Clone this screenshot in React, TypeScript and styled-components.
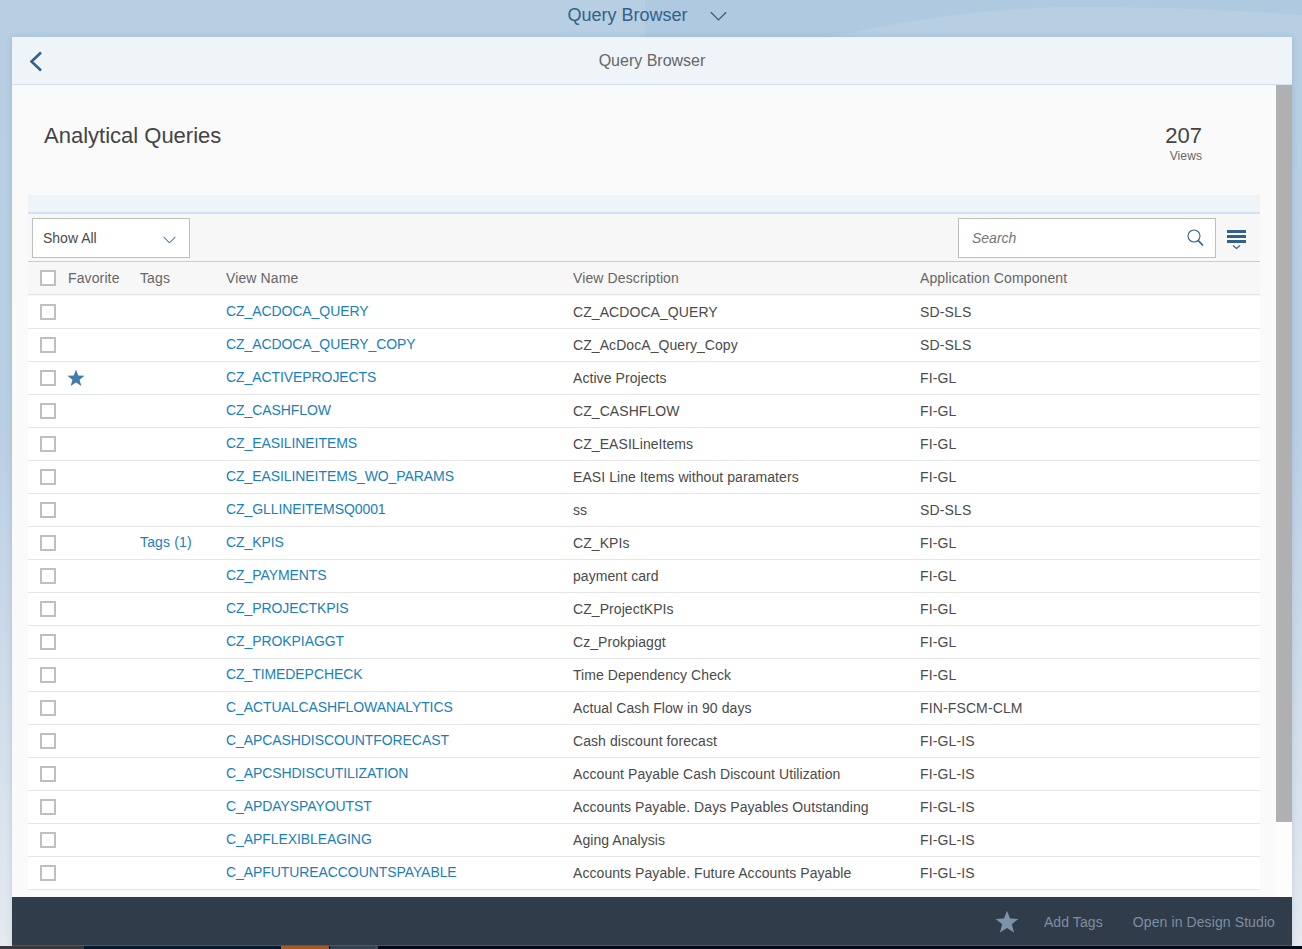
import React from 'react';
import styled, { createGlobalStyle } from 'styled-components';

const GlobalStyle = createGlobalStyle`
  html, body {
    margin: 0;
    padding: 0;
    height: 100%;
    overflow: hidden;
  }
  body {
    font-family: "Liberation Sans", Arial, sans-serif;
    color: #333;
  }
`;

const rows = [
  { name: 'CZ_ACDOCA_QUERY', desc: 'CZ_ACDOCA_QUERY', comp: 'SD-SLS' },
  { name: 'CZ_ACDOCA_QUERY_COPY', desc: 'CZ_AcDocA_Query_Copy', comp: 'SD-SLS' },
  { name: 'CZ_ACTIVEPROJECTS', desc: 'Active Projects', comp: 'FI-GL', favorite: true },
  { name: 'CZ_CASHFLOW', desc: 'CZ_CASHFLOW', comp: 'FI-GL' },
  { name: 'CZ_EASILINEITEMS', desc: 'CZ_EASILineItems', comp: 'FI-GL' },
  { name: 'CZ_EASILINEITEMS_WO_PARAMS', desc: 'EASI Line Items without paramaters', comp: 'FI-GL' },
  { name: 'CZ_GLLINEITEMSQ0001', desc: 'ss', comp: 'SD-SLS' },
  { name: 'CZ_KPIS', desc: 'CZ_KPIs', comp: 'FI-GL', tags: 'Tags (1)' },
  { name: 'CZ_PAYMENTS', desc: 'payment card', comp: 'FI-GL' },
  { name: 'CZ_PROJECTKPIS', desc: 'CZ_ProjectKPIs', comp: 'FI-GL' },
  { name: 'CZ_PROKPIAGGT', desc: 'Cz_Prokpiaggt', comp: 'FI-GL' },
  { name: 'CZ_TIMEDEPCHECK', desc: 'Time Dependency Check', comp: 'FI-GL' },
  { name: 'C_ACTUALCASHFLOWANALYTICS', desc: 'Actual Cash Flow in 90 days', comp: 'FIN-FSCM-CLM' },
  { name: 'C_APCASHDISCOUNTFORECAST', desc: 'Cash discount forecast', comp: 'FI-GL-IS' },
  { name: 'C_APCSHDISCUTILIZATION', desc: 'Account Payable Cash Discount Utilization', comp: 'FI-GL-IS' },
  { name: 'C_APDAYSPAYOUTST', desc: 'Accounts Payable. Days Payables Outstanding', comp: 'FI-GL-IS' },
  { name: 'C_APFLEXIBLEAGING', desc: 'Aging Analysis', comp: 'FI-GL-IS' },
  { name: 'C_APFUTUREACCOUNTSPAYABLE', desc: 'Accounts Payable. Future Accounts Payable', comp: 'FI-GL-IS' },
];

const taskbar = [
  { width: 84, color: '#38383a' },
  { width: 197, color: '#05192e' },
  { width: 48, color: '#a35a24' },
  { width: 1, color: '#000' },
  { width: 45, color: '#34424f' },
  { width: 3, color: '#444b55' },
  { width: 924, color: '#030a17' },
];

const Page = styled.div`
  position: relative;
  width: 1302px;
  height: 949px;
  overflow: hidden;
  display: flex;
  flex-direction: column;
  background: linear-gradient(180deg, #b7cee3 0%, #b9cfe4 45%, #dde5ee 90%, #e6eaf0 100%);
`;

const Wave = styled.svg`
  position: absolute;
  top: 0;
  right: 0;
`;

const ShellBar = styled.header`
  position: relative;
  height: 37px;
  flex: none;
  display: flex;
  align-items: center;
  justify-content: center;
  gap: 22px;
  padding: 0 8px 7px 0;
  box-sizing: border-box;
  color: #346187;
  font-size: 18px;
`;

const Frame = styled.div`
  position: relative;
  flex: 1;
  min-height: 0;
  margin: 0 10px 0 12px;
  display: flex;
  flex-direction: column;
  box-shadow: 0 0 6px rgba(60, 90, 130, 0.18);
`;

const NavBar = styled.div`
  position: relative;
  flex: none;
  height: 48px;
  box-sizing: border-box;
  background: #eff4f9;
  border-bottom: 1px solid #cfe1f2;
  display: flex;
  align-items: center;
  justify-content: center;
  color: #666;
  font-size: 16px;
`;

const BackButton = styled.button`
  position: absolute;
  left: 17px;
  top: 14px;
  padding: 0;
  border: 0;
  background: none;
  display: flex;
`;

const Body = styled.div`
  flex: 1;
  min-height: 0;
  display: flex;
  background: #fafafa;
`;

const Content = styled.main`
  flex: 1;
  min-width: 0;
  padding: 0 16px;
`;

const Scrollbar = styled.div`
  flex: none;
  width: 16px;
  background: #fdfdfd;
`;

const ScrollThumb = styled.div`
  height: 737px;
  background: #b0b0b0;
`;

const Heading = styled.section`
  height: 110px;
  box-sizing: border-box;
  padding: 38px 58px 0 16px;
  display: flex;
  justify-content: space-between;
`;

const Title = styled.h1`
  margin: 0;
  font-size: 22px;
  font-weight: 400;
  line-height: 26px;
  color: #444;
`;

const Counter = styled.div`
  text-align: right;
`;

const CounterValue = styled.div`
  font-size: 22px;
  line-height: 26px;
  color: #444;
`;

const CounterLabel = styled.div`
  margin-top: -1px;
  font-size: 12px;
  line-height: 16px;
  letter-spacing: 0.1px;
  color: #666;
`;

const InfoStrip = styled.div`
  height: 19px;
  box-sizing: border-box;
  background: #eff4f9;
  border-bottom: 2px solid #cfe1f2;
`;

const Toolbar = styled.div`
  height: 48px;
  box-sizing: border-box;
  background: #f7f7f7;
  border-bottom: 1px solid #ccc;
  padding: 4px 14px 0 4px;
  display: flex;
  align-items: flex-start;
  justify-content: space-between;
`;

const ToolbarEnd = styled.div`
  display: flex;
  align-items: flex-start;
  gap: 10px;
`;

const Field = styled.div<{ $width: number }>`
  width: ${(p) => p.$width}px;
  height: 40px;
  box-sizing: border-box;
  background: #fff;
  border: 1px solid #bfbfbf;
  display: flex;
  align-items: center;
  justify-content: space-between;
  font-size: 14px;
  color: #4a4a4a;
`;

const SelectField = styled(Field)`
  padding: 0 13px 0 10px;
`;

const SearchField = styled(Field)`
  padding: 0 11px 0 13px;
  color: #757575;
  font-style: italic;
`;

const ListButton = styled.button`
  width: 20px;
  height: 26px;
  margin-top: 12px;
  padding: 0;
  border: 0;
  background: none;
  display: flex;
`;

const Row = styled.div<{ $head?: boolean }>`
  display: grid;
  grid-template-columns: 40px 72px 86px 347px 347px 1fr;
  align-items: center;
  box-sizing: border-box;
  height: 33px;
  border-bottom: 1px solid #e5e5e5;
  background: ${(p) => (p.$head ? '#f7f7f7' : '#fff')};
  color: ${(p) => (p.$head ? '#666' : '#4a4a4a')};
  font-size: 14px;
  letter-spacing: ${(p) => (p.$head ? 0.12 : 0.07)}px;
`;

const TableHead = styled.div`
  padding-bottom: 1px;
  background: #f7f7f7;
`;

const Checkbox = styled.span`
  display: block;
  width: 16px;
  height: 16px;
  margin-left: 12px;
  box-sizing: border-box;
  background: #fff;
  border: 2px solid #bfbfbf;
`;

const Cell = styled.span`
  white-space: nowrap;
`;

const LinkCell = styled(Cell)`
  color: #1a80bc;
  position: relative;
  top: -1px;
`;

const NameCell = styled(LinkCell)`
  letter-spacing: -0.08px;
`;

const TagsCell = styled(LinkCell)`
  letter-spacing: 0.15px;
`;

const ComponentCell = styled(Cell)`
  letter-spacing: 0.13px;
`;

const FavoriteCell = styled.span`
  display: flex;
  margin-left: -1px;
`;

const Footer = styled.footer`
  flex: none;
  height: 49px;
  box-sizing: border-box;
  background: #303c49;
  border-bottom: 1px solid #47586a;
  padding: 2px 17px 0 0;
  display: flex;
  align-items: center;
  justify-content: flex-end;
  gap: 30px;
  color: #7c8fa3;
  font-size: 14px;
  letter-spacing: 0.1px;
`;

const FooterStar = styled.span`
  display: flex;
  margin-right: -5px;
`;

const Taskbar = styled.div`
  flex: none;
  height: 3px;
  display: flex;
  position: relative;
`;

const TaskItem = styled.span<{ $width: number; $color: string }>`
  width: ${(p) => p.$width}px;
  background: ${(p) => p.$color};
`;

const Chevron = ({ size, color, className }: { size: number; color: string; className?: string }) => (
  <svg className={className} width={size} height={size * 0.6} viewBox="0 0 20 12" fill="none" stroke={color} strokeWidth="1.6">
    <path d="M1 1.5 L10 10.5 L19 1.5" />
  </svg>
);

const ShellChevron = styled(Chevron)`
  margin-top: 3px;
`;

const SelectChevron = styled(Chevron)`
  margin-top: 3px;
`;

const Star = ({ size, color }: { size: number; color: string }) => (
  <svg width={size} height={size} viewBox="0 0 24 24" fill={color}>
    <path d="M12 .8 L15 8.6 L23.4 9 L16.8 14.3 L19.1 22.6 L12 17.9 L4.9 22.6 L7.2 14.3 L.6 9 L9 8.6 Z" />
  </svg>
);

export default function App() {
  return (
    <Page>
      <GlobalStyle />
      <Wave width="657" height="37" viewBox="0 0 657 37">
        <path d="M0 0 H657 V15 C570 9 480 6 415 7 C340 9 260 20 185 37 H0 Z" fill="#afc9e1" />
      </Wave>
      <ShellBar>
        <span>Query Browser</span>
        <ShellChevron size={17} color="#346187" />
      </ShellBar>
      <Frame>
        <NavBar>
          <BackButton aria-label="Back">
            <svg width="14" height="22" viewBox="0 0 14 22" fill="none" stroke="#346187" strokeWidth="2.6">
              <path d="M12 1.5 L2.5 10.5 L12 19.5" />
            </svg>
          </BackButton>
          Query Browser
        </NavBar>
        <Body>
          <Content>
            <Heading>
              <Title>Analytical Queries</Title>
              <Counter>
                <CounterValue>207</CounterValue>
                <CounterLabel>Views</CounterLabel>
              </Counter>
            </Heading>
            <InfoStrip />
            <Toolbar>
              <SelectField $width={158}>
                Show All
                <SelectChevron size={13} color="#4f7dab" />
              </SelectField>
              <ToolbarEnd>
                <SearchField $width={258}>
                  Search
                  <svg width="17" height="18" viewBox="0 0 17 18" fill="none" stroke="#346187">
                    <circle cx="7" cy="7" r="6" strokeWidth="1.1" />
                    <path d="M11.2 11.5 L16 16.5" strokeWidth="1.8" />
                  </svg>
                </SearchField>
                <ListButton aria-label="View settings">
                  <svg width="20" height="22" viewBox="0 0 20 22" fill="none" stroke="#346187">
                    <path d="M1 1.5 H20 M1 6.5 H20 M1 11.5 H20" strokeWidth="3" />
                    <path d="M7 15.5 L10.5 18.5 L14 15.5" strokeWidth="1.2" />
                  </svg>
                </ListButton>
              </ToolbarEnd>
            </Toolbar>
            <TableHead>
              <Row $head>
                <Checkbox />
                <Cell>Favorite</Cell>
                <Cell>Tags</Cell>
                <Cell>View Name</Cell>
                <Cell>View Description</Cell>
                <Cell>Application Component</Cell>
              </Row>
            </TableHead>
            {rows.map((row) => (
              <Row key={row.name}>
                <Checkbox />
                <FavoriteCell>
                  {row.favorite && <Star size={18} color="#427cac" />}
                </FavoriteCell>
                <TagsCell>{row.tags}</TagsCell>
                <NameCell>{row.name}</NameCell>
                <Cell>{row.desc}</Cell>
                <ComponentCell>{row.comp}</ComponentCell>
              </Row>
            ))}
          </Content>
          <Scrollbar>
            <ScrollThumb />
          </Scrollbar>
        </Body>
        <Footer>
          <FooterStar>
            <Star size={24} color="#7c93aa" />
          </FooterStar>
          <span>Add Tags</span>
          <span>Open in Design Studio</span>
        </Footer>
      </Frame>
      <Taskbar>
        {taskbar.map((item, i) => (
          <TaskItem key={i} $width={item.width} $color={item.color} />
        ))}
      </Taskbar>
    </Page>
  );
}
